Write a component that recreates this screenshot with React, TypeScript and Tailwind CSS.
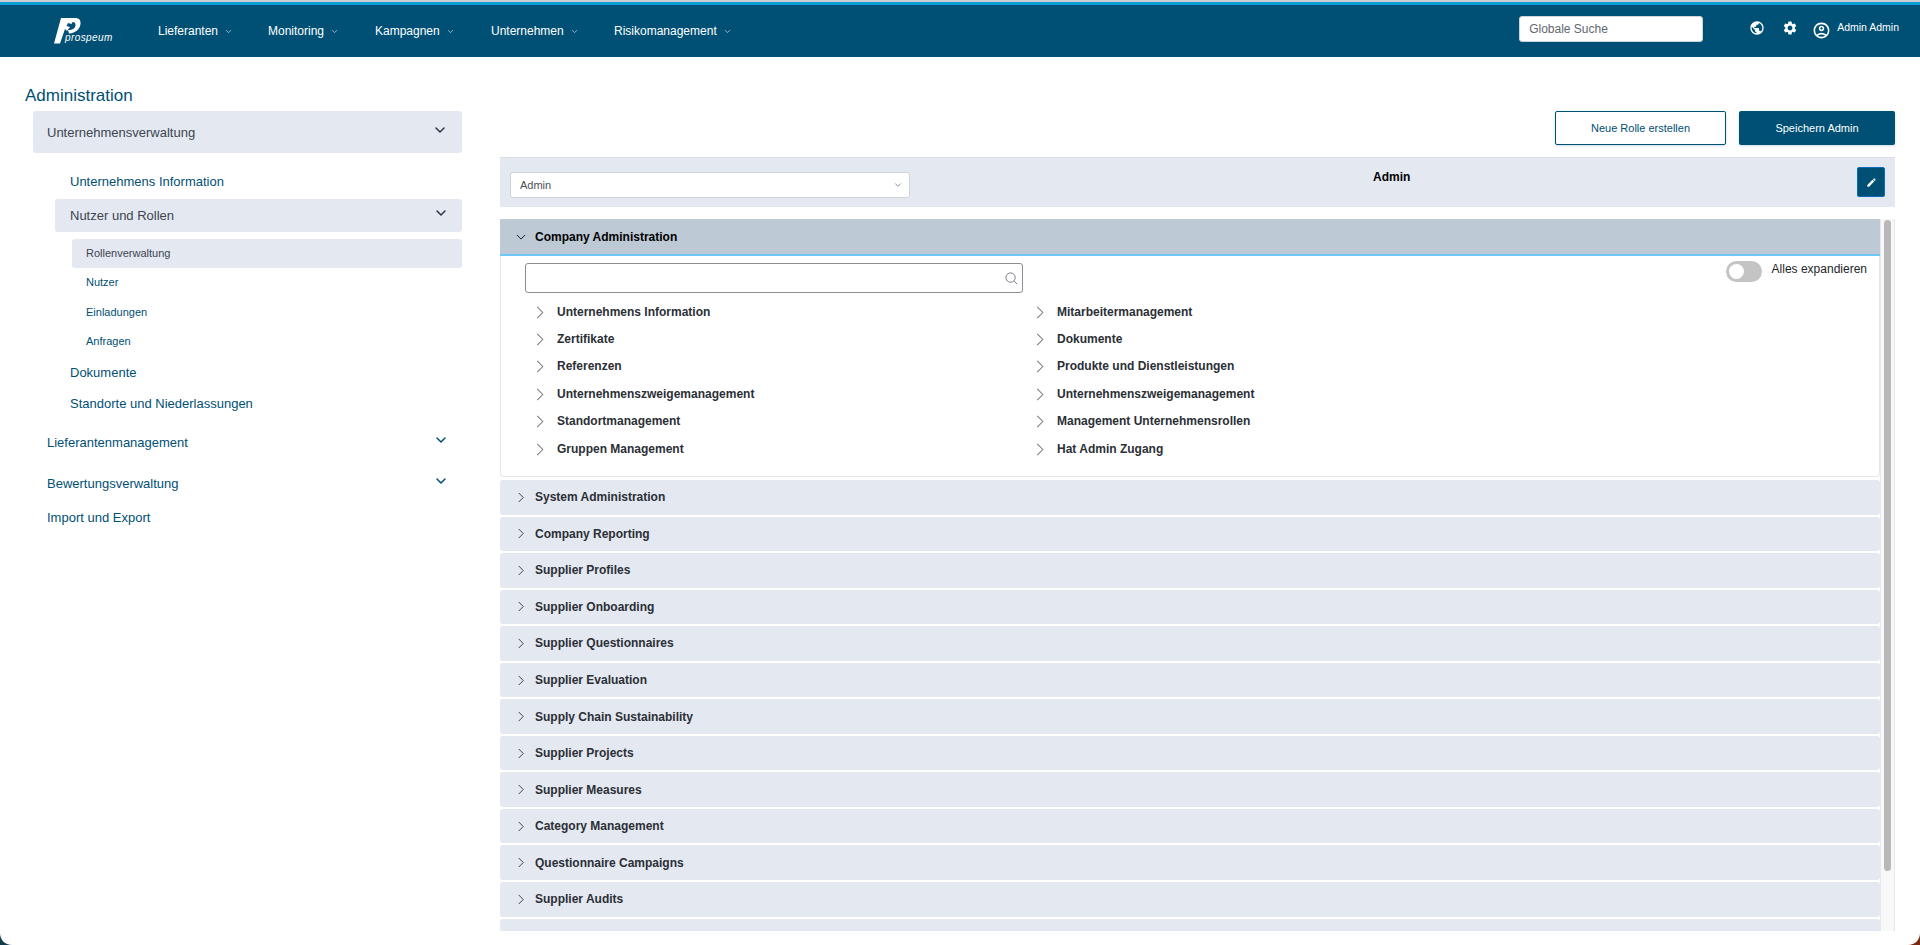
import { ChevronDown } from "lucide-react";
import { MdEdit, MdOutlineAccountCircle, MdPublic, MdSettings } from "react-icons/md";

const navItems = ["Lieferanten", "Monitoring", "Kampagnen", "Unternehmen", "Risikomanagement"];
const navWidths = ["w-[110px]", "w-[107px]", "w-[116px]", "w-[123px]", "w-[130px]"];

const permRows = [
  ["Unternehmens Information", "Mitarbeitermanagement"],
  ["Zertifikate", "Dokumente"],
  ["Referenzen", "Produkte und Dienstleistungen"],
  ["Unternehmenszweigemanagement", "Unternehmenszweigemanagement"],
  ["Standortmanagement", "Management Unternehmensrollen"],
  ["Gruppen Management", "Hat Admin Zugang"],
];

const sections = [
  "System Administration",
  "Company Reporting",
  "Supplier Profiles",
  "Supplier Onboarding",
  "Supplier Questionnaires",
  "Supplier Evaluation",
  "Supply Chain Sustainability",
  "Supplier Projects",
  "Supplier Measures",
  "Category Management",
  "Questionnaire Campaigns",
  "Supplier Audits",
  "Supplier Risks",
];

function ChevronRightThin({ className }: { className: string }) {
  return (
    <svg viewBox="0 0 8 14" className={className} fill="none" stroke="currentColor" strokeWidth="1.1">
      <path d="M1 1l6 6-6 6" />
    </svg>
  );
}

function Logo() {
  return (
    <div className="relative w-[60px] h-[26px] ml-[54px] mr-[44px] shrink-0">
      <svg viewBox="0 0 27 26" className="absolute left-0 top-0 w-[27px] h-[26px]" fill="#fff">
        <path d="M7 0H21C25 0 27 2 26.5 6C26 11 22 15 15 15.500L14 12C19 12 21.500 10 21.500 7C21.500 5 20.500 4 18.500 4L17.500 6L14 5L12.500 8L16 9L13 13L11 11L6 25.500H0Z" />
      </svg>
      <span className="absolute left-[11px] top-[14px] text-[10px] leading-[12px] italic tracking-[0.4px] text-white font-['Liberation_Sans',sans-serif]">
        prospeum
      </span>
    </div>
  );
}

function TopNav() {
  return (
    <header className="h-[52px] bg-[#005075] flex items-center text-white shrink-0">
      <Logo />
      <nav className="flex items-center text-[12px]">
        {navItems.map((item, i) => (
          <div key={item} className={`flex items-center gap-[6px] ${navWidths[i]}`}>
            <span>{item}</span>
            <ChevronDown size={9} strokeWidth={1.5} />
          </div>
        ))}
      </nav>
      <div className="ml-auto flex items-center">
        <div className="w-[184px] h-[26px] bg-white rounded-[3px] border border-[#ced4da] pl-[9px] flex items-center text-[12px] text-[#5f6770] mr-[46px] mt-[-5px]">
          Globale Suche
        </div>
        <MdPublic size={16} className="mr-[17px] mt-[-6px]" />
        <MdSettings size={16} className="mr-[14px] mt-[-6px]" />
        <MdOutlineAccountCircle size={19} className="mr-[6px] mt-[-1px]" />
        <span className="text-[10.5px] mr-[21px] mt-[-6px]">Admin Admin</span>
      </div>
    </header>
  );
}

function Sidebar() {
  return (
    <aside className="w-[500px] shrink-0 text-[13px] text-[#005075]">
      <h1 className="mt-[29px] ml-[25px] h-[20px] leading-[20px] text-[17px]">Administration</h1>
      <div className="mt-[5px] ml-[33px] w-[429px] h-[42px] bg-[#e4e8f0] rounded-[3px] pl-[14px] pr-[14px] flex items-center justify-between text-[#3c4550]">
        <span className="mt-[2px]">Unternehmensverwaltung</span>
        <ChevronDown size={16} strokeWidth={2.25} className="text-[#2c3340] mt-[-4px]" />
      </div>
      <div className="mt-[16px] ml-[70px] h-[26px] leading-[26px]">Unternehmens Information</div>
      <div className="mt-[4px] ml-[55px] w-[407px] h-[33px] bg-[#e4e8f0] rounded-[3px] pl-[15px] pr-[13px] flex items-center justify-between text-[#3c4550]">
        <span>Nutzer und Rollen</span>
        <ChevronDown size={16} strokeWidth={2.25} className="text-[#2c3340] mt-[-5px]" />
      </div>
      <div className="mt-[7px] ml-[72px] w-[390px] h-[29px] bg-[#e4e8f0] rounded-[3px] pl-[14px] flex items-center text-[11px] text-[#3c4550]">
        Rollenverwaltung
      </div>
      <div className="ml-[86px] text-[11px]">
        <div className="h-[29.5px] leading-[29.5px]">Nutzer</div>
        <div className="h-[29.5px] leading-[29.5px]">Einladungen</div>
        <div className="h-[29.5px] leading-[29.5px]">Anfragen</div>
      </div>
      <div className="ml-[70px] h-[31px] leading-[31px]">Dokumente</div>
      <div className="ml-[70px] h-[32px] leading-[32px]">Standorte und Niederlassungen</div>
      <div className="mt-[3px] ml-[47px] w-[402px] h-[40px] flex items-center justify-between">
        <span>Lieferantenmanagement</span>
        <ChevronDown size={16} strokeWidth={2.25} className="mt-[-6px]" />
      </div>
      <div className="mt-[1px] ml-[47px] w-[402px] h-[40px] flex items-center justify-between">
        <span>Bewertungsverwaltung</span>
        <ChevronDown size={16} strokeWidth={2.25} className="mt-[-6px]" />
      </div>
      <div className="ml-[47px] h-[28px] leading-[28px]">Import und Export</div>
    </aside>
  );
}

function OpenPanel() {
  return (
    <div className="h-[221px] border border-t-0 border-[#e6e6e6] rounded-b-[4px] bg-white">
      <div className="flex justify-between items-start pt-[5px] pr-[12px]">
        <div className="ml-[24px] mt-[2px] w-[498px] h-[30px] border border-[#8a8f94] rounded-[3px] flex items-center justify-end pr-[4px]">
          <svg viewBox="0 0 14 14" className="w-[13px] h-[13px] text-[#6c757d]" fill="none" stroke="currentColor" strokeWidth="1">
            <circle cx="6" cy="6" r="5" />
            <path d="M9.800 9.800L13 13" />
          </svg>
        </div>
        <div className="flex items-start">
          <div className="w-[36px] h-[21px] rounded-full bg-[#c4c4c4] p-[3px]">
            <div className="w-[15px] h-[15px] rounded-full bg-white" />
          </div>
          <span className="ml-[10px] text-[12px] leading-[16px] text-[#212529]">Alles expandieren</span>
        </div>
      </div>
      <div className="mt-[5px] pl-[35px] grid grid-cols-[500px_1fr]">
        {permRows.flat().map((label, i) => (
          <div key={i} className="h-[27.4px] flex items-center text-[12px] font-bold text-[#2b2f36]">
            <ChevronRightThin className="w-[8px] h-[13px] text-[#7c7c7c] mr-[13px] mt-[1px] shrink-0" />
            <span>{label}</span>
          </div>
        ))}
      </div>
    </div>
  );
}

function RolePane() {
  return (
    <main className="w-[1395px] shrink-0">
      <div className="pt-[54px] mb-[12px] flex justify-end gap-[13px] text-[11px]">
        <button className="w-[171px] h-[34px] rounded-[2px] border border-[#005075] bg-white text-[#005075] shadow-[0_1px_3px_rgba(0,80,117,0.2)]">
          Neue Rolle erstellen
        </button>
        <button className="w-[156px] h-[34px] rounded-[2px] bg-[#005075] text-white shadow-[0_1px_3px_rgba(0,80,117,0.2)]">
          Speichern Admin
        </button>
      </div>
      <div className="h-[50px] bg-[#e4e8f0] border-t border-[#dadfe6] flex items-start relative">
        <div className="mt-[14px] ml-[10px] w-[400px] h-[26px] bg-white border border-[#ced4da] rounded-[3px] pl-[9px] pr-[6px] flex items-center justify-between text-[11px] text-[#495057]">
          <span>Admin</span>
          <ChevronDown size={10} strokeWidth={1.5} className="text-[#495057]" />
        </div>
        <span className="ml-[463px] mt-[11px] text-[12px] font-bold text-black leading-[16px]">Admin</span>
        <button className="ml-auto mr-[10px] mt-[9px] w-[28px] h-[30px] bg-[#005075] border border-[#0a6ebd] rounded-[2px] flex items-center justify-center text-white">
          <MdEdit size={11} />
        </button>
      </div>
      <div className="mt-[12px] h-[712px] flex overflow-hidden">
        <div className="w-[1380px] shrink-0">
          <div className="h-[37px] bg-[#bdcad5] border-b-2 border-[#6fc8f8] pl-[16px] flex items-center text-[12px] font-bold text-black">
            <svg viewBox="0 0 12 7" className="w-[10px] h-[6px] mr-[9px] text-[#222]" fill="none" stroke="currentColor" strokeWidth="1.2">
              <path d="M1 1l5 5 5-5" />
            </svg>
            Company Administration
          </div>
          <OpenPanel />
          <div className="mt-[3px] flex flex-col gap-[2px]">
            {sections.map((title) => (
              <div key={title} className="h-[34.55px] shrink-0 bg-[#e4e8f0] rounded-[3px] pl-[18px] flex items-center text-[12px] font-bold text-[#2b2f36]">
                <ChevronRightThin className="w-[6px] h-[11px] mr-[11px] text-[#222] shrink-0" />
                {title}
              </div>
            ))}
          </div>
        </div>
        <div className="w-[15px] shrink-0 bg-[#f8f8f8] border-x border-[#e8e8e8] px-[3px] pt-[1px]">
          <div className="h-[651px] rounded-[4px] bg-[#b8b8b8]" />
        </div>
      </div>
    </main>
  );
}

export default function App() {
  return (
    <div className="relative w-[1920px] h-[945px] overflow-hidden bg-white flex flex-col font-['Liberation_Sans',Arial,sans-serif]">
      <div className="h-[2px] bg-[#c9cdd0] shrink-0" />
      <div className="h-[3px] bg-[#0a9fd6] shrink-0" />
      <TopNav />
      <div className="flex flex-1 min-h-0">
        <Sidebar />
        <RolePane />
      </div>
      <svg viewBox="0 0 12 12" className="absolute left-0 bottom-0 w-[12px] h-[12px]">
        <path d="M0 0C0 7 5 12 12 12H0Z" fill="#123b4c" />
      </svg>
      <svg viewBox="0 0 12 12" className="absolute right-0 bottom-0 w-[12px] h-[12px]">
        <path d="M12 0C12 7 7 12 0 12H12Z" fill="#7a2a12" />
      </svg>
    </div>
  );
}
